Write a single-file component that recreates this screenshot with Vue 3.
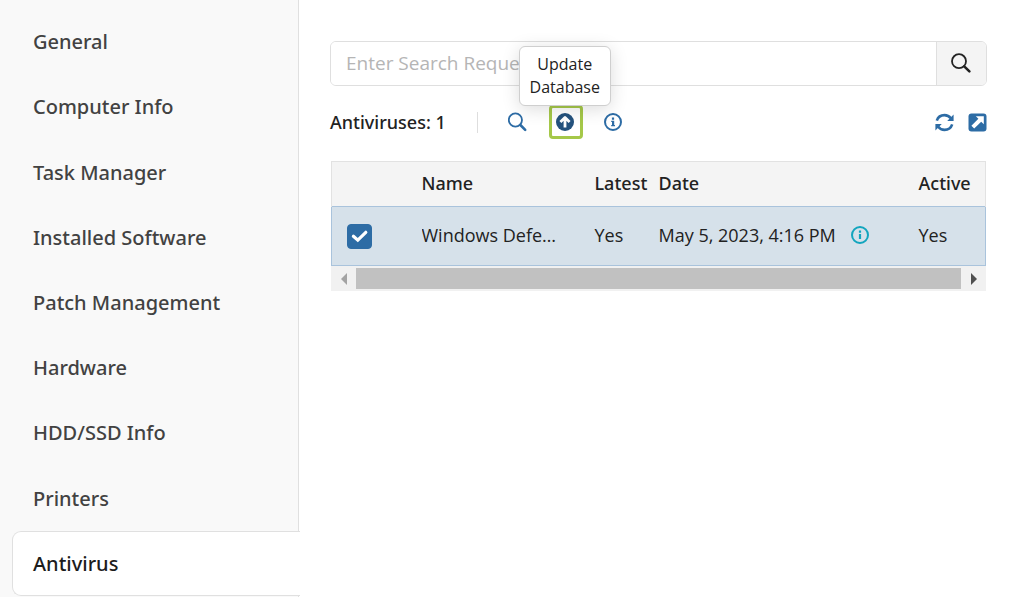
<script setup>
import { ref } from 'vue'

const sections = [
  'General',
  'Computer Info',
  'Task Manager',
  'Installed Software',
  'Patch Management',
  'Hardware',
  'HDD/SSD Info',
  'Printers',
  'Antivirus',
]
const current = ref('Antivirus')
const query = ref('')
const antiviruses = ref([
  { name: 'Windows Defender', latest: 'Yes', date: 'May 5, 2023, 4:16 PM', active: 'Yes', selected: true },
])
</script>

<template>
  <div class="page">
    <nav class="sidebar" aria-label="Sections">
      <a
        v-for="section in sections"
        :key="section"
        href="#"
        class="section"
        :class="{ active: section === current }"
        @click.prevent="current = section"
      >{{ section }}</a>
    </nav>

    <main class="content">
      <form class="search" @submit.prevent>
        <input v-model="query" class="search-input" type="text" aria-label="Search" placeholder="Enter Search Request" />
        <button class="search-button" type="submit" aria-label="Search">
          <svg width="22" height="22" viewBox="0 0 22 22" fill="none" stroke="#222" stroke-linecap="round">
            <circle cx="9" cy="8.2" r="7" stroke-width="1.8" />
            <path d="M14.2 13.4L19.4 18.4" stroke-width="2.6" />
          </svg>
        </button>
      </form>

      <div class="toolbar">
        <span class="count">Antiviruses: {{ antiviruses.length }}</span>
        <span class="divider"></span>
        <div class="actions">
          <button class="tool" type="button" aria-label="Scan">
            <svg width="20" height="20" viewBox="0 0 20 20" fill="none" stroke="#2d6ca5" stroke-linecap="round">
              <circle cx="7.4" cy="8" r="6.6" stroke-width="1.8" />
              <path d="M12.4 13L17.2 17.8" stroke-width="2.6" />
            </svg>
          </button>
          <div class="tool-wrap">
            <button class="tool highlighted" type="button" aria-describedby="update-tip" aria-label="Update Database">
              <svg width="20" height="18" viewBox="0 0 20 18">
                <circle cx="9" cy="9" r="9" fill="#24527d" />
                <path d="M9 14.4V5.4M4.4 9L9 4.4L13.6 9" fill="none" stroke="#fff" stroke-width="2.8" stroke-linejoin="round" />
              </svg>
            </button>
            <div id="update-tip" class="tooltip" role="tooltip">Update Database</div>
          </div>
          <button class="tool" type="button" aria-label="Information">
            <svg width="20" height="18" viewBox="0 0 20 18">
              <circle cx="9" cy="9" r="8" fill="none" stroke="#2d6ca5" stroke-width="2" />
              <path d="M7.9 4.6h2.2v2.1H7.9zM7.2 7.8H10.2v4.1h.8v1.4H7.2v-1.4H8V9.1h-.8z" fill="#2d6ca5" />
            </svg>
          </button>
        </div>
        <div class="view-actions">
          <button class="plain" type="button" aria-label="Refresh">
            <svg width="19" height="19" viewBox="0 0 19 19" fill="none" stroke="#2d6ca5" stroke-width="2.6">
              <path d="M1.8 7.6C3 4 6 2.1 9.5 2.1C12 2.1 14.3 3.2 15.8 5.2" />
              <path d="M17.2 11.4C16 15 13 16.9 9.5 16.9C7 16.9 4.7 15.8 3.2 13.8" />
              <path d="M18.6 1.6V8H12.2zM.4 17.4V11H6.8z" fill="#2d6ca5" stroke="none" />
            </svg>
          </button>
          <button class="plain" type="button" aria-label="Open in new window">
            <svg width="19" height="19" viewBox="0 0 19 19">
              <rect x="0.5" y="0.5" width="18" height="18" rx="3" fill="#2d6ca5" />
              <path d="M7.8 3.2H15.8V11.2L13.2 8.7L6.2 15.6L3.4 12.8L10.4 5.8z" fill="#fff" />
            </svg>
          </button>
        </div>
      </div>

      <div class="grid">
        <table>
          <colgroup>
            <col class="col-check" />
            <col class="col-name" />
            <col class="col-latest" />
            <col class="col-date" />
            <col />
          </colgroup>
          <thead>
            <tr>
              <td></td>
              <th scope="col">Name</th>
              <th scope="col">Latest</th>
              <th scope="col">Date</th>
              <th scope="col">Active</th>
            </tr>
          </thead>
          <tbody>
            <tr v-for="item in antiviruses" :key="item.name">
              <td class="check-cell">
                <input v-model="item.selected" type="checkbox" class="check" :aria-label="'Select ' + item.name" />
                <svg v-if="item.selected" class="tick" width="25" height="25" viewBox="0 0 25 25">
                  <path d="M6.4 12.8L10.8 16.6L18.8 8.8" fill="none" stroke="#fff" stroke-width="3.2" stroke-linecap="round" />
                </svg>
              </td>
              <td class="name">{{ item.name }}</td>
              <td>{{ item.latest }}</td>
              <td>
                <div class="date">
                  <span>{{ item.date }}</span>
                  <svg width="18" height="18" viewBox="0 0 18 18">
                    <circle cx="9" cy="9" r="8" fill="none" stroke="#12a5be" stroke-width="2" />
                    <path d="M7.9 4.6h2.2v2.1H7.9zM7.9 8h2.2v5H7.9z" fill="#12a5be" />
                  </svg>
                </div>
              </td>
              <td>{{ item.active }}</td>
            </tr>
          </tbody>
        </table>
        <div class="scrollbar">
          <button class="scroll-arrow" type="button" aria-label="Scroll left">
            <svg width="6" height="12" viewBox="0 0 6 12"><path d="M6 0V12L0 6z" fill="#a3a3a3" /></svg>
          </button>
          <div class="thumb"></div>
          <button class="scroll-arrow" type="button" aria-label="Scroll right">
            <svg width="6" height="12" viewBox="0 0 6 12"><path d="M0 0V12L6 6z" fill="#505050" /></svg>
          </button>
        </div>
      </div>
    </main>
  </div>
</template>

<style>
body {
  margin: 0;
  background: #fff;
}
</style>

<style scoped>
.page {
  display: flex;
  min-height: 100vh;
  font-family: "Open Sans", "Noto Sans", sans-serif;
  font-size: 18px;
  color: #222;
}
.page *,
.page {
  box-sizing: border-box;
}
button {
  display: flex;
  align-items: center;
  justify-content: center;
  padding: 0;
  border: 0;
  background: none;
  font: inherit;
  cursor: pointer;
}
svg {
  display: block;
  flex: none;
}
.section,
.count,
th {
  font-family: "Noto Sans", "Open Sans", sans-serif;
  font-weight: 500;
}
.sidebar {
  display: flex;
  flex-direction: column;
  flex: none;
  width: 299px;
  padding: 9px 0 1px 12px;
  background: #f9f9f9;
  border-right: 1px solid #e0e0e0;
}
.section {
  display: flex;
  align-items: center;
  flex: 1 0 65px;
  max-height: 66px;
  padding-left: 20px;
  border: 1px solid transparent;
  border-right: 0;
  border-radius: 9px 0 0 9px;
  font-size: 20px;
  color: #424242;
  text-decoration: none;
}
.section.active {
  margin-right: -2px;
  background: #fff;
  border-color: #e0e0e0;
  color: #1c1c1c;
}
.content {
  flex: 1;
  min-width: 0;
  padding: 41px 31px 31px;
}
.search {
  display: flex;
  height: 45px;
  border: 1px solid #dfdfdf;
  border-radius: 6px;
  overflow: hidden;
}
.search-input {
  flex: 1;
  min-width: 0;
  padding: 0 15px 2px;
  border: 0;
  outline: 0;
  background: #fff;
  font: inherit;
  font-size: 19px;
}
.search-input::placeholder {
  color: #b5b5b5;
  opacity: 1;
}
.search-button {
  width: 50px;
  padding-right: 2px;
  background: #f4f4f4;
  border-left: 1px solid #dfdfdf;
}
.toolbar {
  display: flex;
  align-items: center;
  height: 34px;
  margin: 19px 0 22px;
}
.divider {
  width: 1px;
  height: 21px;
  margin: 0 23px 0 31px;
  background: #dedede;
}
.actions {
  display: flex;
  gap: 14px;
}
.tool {
  width: 34px;
  height: 34px;
}
.highlighted {
  border: 3px solid #a5c849;
  border-radius: 4px;
}
.tool-wrap {
  position: relative;
}
.tooltip {
  position: absolute;
  bottom: 33px;
  left: 50%;
  width: 92px;
  margin-left: -47px;
  padding: 6px 8px;
  background: #fff;
  border: 1px solid #cfcfcf;
  border-radius: 6px;
  box-shadow: 0 3px 18px rgba(0, 0, 0, 0.14);
  font-size: 16px;
  line-height: 23px;
  text-align: center;
}
.view-actions {
  display: flex;
  gap: 14px;
  margin-left: auto;
}
.grid {
  margin: 0 1px;
}
table {
  width: 100%;
  table-layout: fixed;
  border-collapse: collapse;
}
.col-check {
  width: 90px;
}
.col-name {
  width: 173px;
}
.col-latest {
  width: 64px;
}
.col-date {
  width: 260px;
}
th,
td {
  padding: 0 0 2px;
  text-align: left;
  white-space: nowrap;
}
thead tr {
  height: 45px;
  background: #f4f4f4;
  border: 1px solid #e2e2e2;
  border-bottom: 0;
}
tbody tr {
  height: 59px;
  background: #d6e1ea;
  border: 1px solid #a9c3dc;
}
.check-cell {
  position: relative;
  padding: 0 0 0 15px;
}
.check {
  display: block;
  appearance: none;
  width: 25px;
  height: 25px;
  margin: 0;
  border: 1px solid #2d6ca5;
  border-radius: 4px;
  background: #fff;
}
.check:checked {
  background: #2d6ca5;
}
.tick {
  position: absolute;
  top: 50%;
  left: 15px;
  transform: translateY(-50%);
  pointer-events: none;
}
.name {
  padding-right: 33px;
  overflow: hidden;
  text-overflow: ellipsis;
}
.date {
  display: flex;
  align-items: center;
  gap: 15px;
}
.scrollbar {
  display: flex;
  height: 25px;
  padding: 2px 0;
  background: #f1f1f1;
}
.scroll-arrow {
  width: 25px;
}
.thumb {
  flex: 1;
  background: #c1c1c1;
}
</style>
